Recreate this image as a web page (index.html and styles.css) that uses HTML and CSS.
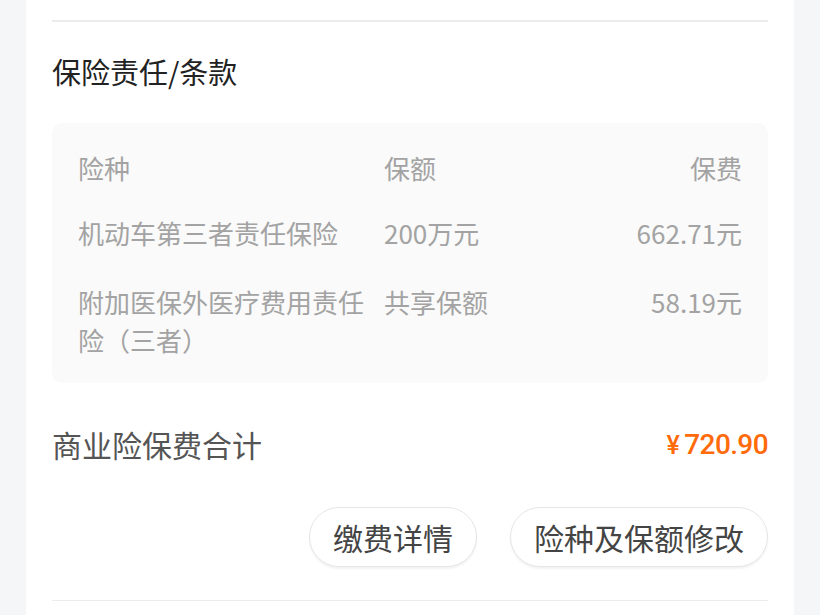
FILE: index.html
```html
<!DOCTYPE html>
<html lang="zh-CN">
<head>
    <meta charset="UTF-8">
    <meta name="viewport" content="width=device-width, initial-scale=1.0">
    <title>保险责任/条款</title>
    <link rel="stylesheet" href="styles.css">
</head>
<body>
    <div class="card">
        <div class="divider top"></div>
        <h2 class="section-title">保险责任/条款</h2>
        <div class="table">
            <div class="row head">
                <span>险种</span>
                <span>保额</span>
                <span class="fee">保费</span>
            </div>
            <div class="row">
                <span>机动车第三者责任保险</span>
                <span>200万元</span>
                <span class="fee">662.71元</span>
            </div>
            <div class="row">
                <span>附加医保外医疗费用责任险（三者）</span>
                <span>共享保额</span>
                <span class="fee">58.19元</span>
            </div>
        </div>
        <div class="total">
            <span class="total-label">商业险保费合计</span>
            <span class="total-price"><span class="currency">¥</span>720.90</span>
        </div>
        <div class="button-group">
            <button type="button">缴费详情</button>
            <button type="button">险种及保额修改</button>
        </div>
        <div class="divider bottom"></div>
    </div>
</body>
</html>
```

FILE: styles.css
```css
body {
    margin: 0;
    padding: 0;
    background-color: #f5f6f8;
    font-family: "Noto Sans CJK SC", "Noto Sans", sans-serif;
    height: 615px;
    overflow: hidden;
}
.card {
    background-color: #fff;
    margin: 0 26px;
    padding: 20px 26px 0;
    height: 615px;
    box-sizing: border-box;
}
.divider {
    background-color: #ececec;
}
.divider.top {
    height: 2px;
}
.divider.bottom {
    height: 1px;
    margin-top: 33px;
}
.section-title {
    margin: 29px 0 32px;
    font-size: 29px;
    line-height: 40px;
    font-weight: normal;
    color: #222;
}
.table {
    background-color: #fafafa;
    border-radius: 10px;
    padding: 26px 26px 24px;
    height: 260px;
    box-sizing: border-box;
}
.row {
    display: grid;
    grid-template-columns: 306px 1fr 1fr;
    font-size: 26px;
    line-height: 38px;
    color: #a3a3a3;
}
.row.head {
    margin-bottom: 27px;
}
.row + .row:not(.head) {
    margin-top: 31px;
}
.row.head + .row {
    margin-top: 0;
}
.row .fee {
    text-align: right;
}
.total {
    display: flex;
    justify-content: space-between;
    align-items: center;
    margin-top: 41px;
    height: 40px;
}
.total-label {
    font-size: 30px;
    color: #555;
}
.total-price {
    font-family: Roboto, "Noto Sans CJK SC", sans-serif;
    font-size: 28px;
    font-weight: 500;
    letter-spacing: -0.6px;
    color: #ff6a0a;
}
.total-price .currency {
    font-size: 25px;
    margin-right: 5px;
}
.button-group {
    display: flex;
    justify-content: flex-end;
    gap: 33px;
    margin-top: 43px;
}
.button-group button {
    height: 60px;
    padding: 0 23px;
    border: 1px solid #e6e6e6;
    border-radius: 30px;
    background-color: #fff;
    box-shadow: 0 2px 2px rgba(0, 0, 0, 0.05);
    font-family: "Noto Sans CJK SC", sans-serif;
    font-size: 30px;
    color: #444;
    cursor: pointer;
}
```
